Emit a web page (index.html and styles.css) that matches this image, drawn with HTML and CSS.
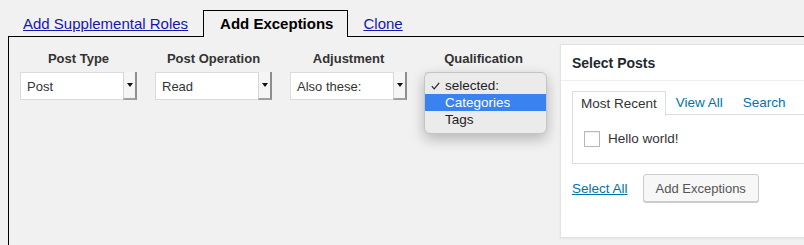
FILE: index.html
```html
<!DOCTYPE html>
<html lang="en">
<head>
<meta charset="utf-8">
<title>Add Exceptions</title>
<link rel="stylesheet" href="styles.css">
</head>
<body>
<nav class="tabs">
  <a class="tab" href="#">Add Supplemental Roles</a>
  <span class="tab tab-active">Add Exceptions</span>
  <a class="tab" href="#">Clone</a>
</nav>
<div class="tab-body">
  <div class="field">
    <div class="field-label">Post Type</div>
    <div class="select"><span class="select-value">Post</span><span class="select-arrow"></span></div>
  </div>
  <div class="field">
    <div class="field-label">Post Operation</div>
    <div class="select"><span class="select-value">Read</span><span class="select-arrow"></span></div>
  </div>
  <div class="field">
    <div class="field-label">Adjustment</div>
    <div class="select"><span class="select-value">Also these:</span><span class="select-arrow"></span></div>
  </div>
  <div class="field">
    <div class="field-label">Qualification</div>
    <div class="select-wrap">
      <div class="select"><span class="select-value"></span><span class="select-arrow"></span></div>
      <ul class="popup">
        <li class="popup-item"><svg class="popup-check" width="9" height="8" viewBox="0 0 9 8"><polyline points="0.8,4.2 3.2,6.8 8.2,0.8" fill="none" stroke="#222" stroke-width="1.2"/></svg>selected:</li>
        <li class="popup-item popup-item-active">Categories</li>
        <li class="popup-item">Tags</li>
      </ul>
    </div>
  </div>
  <section class="panel">
    <h3 class="panel-title">Select Posts</h3>
    <div class="panel-body">
      <ul class="ptabs">
        <li class="ptab ptab-active">Most Recent</li>
        <li class="ptab"><a href="#">View All</a></li>
        <li class="ptab"><a href="#">Search</a></li>
      </ul>
      <div class="ptab-panel">
        <label class="post-item"><span class="checkbox"></span>Hello world!</label>
      </div>
      <div class="panel-actions">
        <a class="select-all" href="#">Select All</a>
        <button class="button" type="button">Add Exceptions</button>
      </div>
    </div>
  </section>
</div>
</body>
</html>
```
FILE: styles.css
```css
html, body {
  margin: 0;
  padding: 0;
}
body {
  background: #f1f1f1;
  font-family: "Liberation Sans", Arial, Helvetica, sans-serif;
  color: #333;
  overflow: hidden;
  height: 245px;
}

/* top tabs */
.tabs {
  display: flex;
  align-items: flex-end;
  padding: 10px 0 0 8px;
  height: 26px;
}
.tab {
  display: block;
  padding: 0 15px;
  font-size: 15px;
  line-height: 25px;
  height: 25px;
  color: #1616b4;
  text-decoration: underline;
}
.tab-active {
  position: relative;
  z-index: 1;
  color: #000;
  font-weight: bold;
  text-decoration: none;
  border: 1px solid #000;
  border-bottom: none;
  background: #f1f1f1;
  padding: 0 14px 0 16px;
  height: 26px;
  margin-bottom: -1px;
}

/* tab body */
.tab-body {
  margin-left: 8px;
  border: 1px solid #000;
  border-right: none;
  border-bottom: none;
  display: flex;
  align-items: flex-start;
  gap: 18px;
  padding: 7px 0 0 11px;
  height: 201px;
}
.field {
  width: 117px;
  flex-shrink: 0;
  margin-top: 6px;
}
.field-label {
  font-size: 13px;
  font-weight: bold;
  line-height: 18px;
  text-align: center;
  color: #333;
  margin-bottom: 4px;
}
.select-wrap {
  position: relative;
}
.select {
  display: flex;
  height: 28px;
  box-sizing: border-box;
  border: 1px solid #dcdcdc;
  background: #fff;
}
.select-value {
  flex: 1;
  padding-left: 6px;
  font-size: 13px;
  line-height: 27px;
  color: #333;
}
.select-arrow {
  position: relative;
  width: 14px;
  box-sizing: border-box;
  margin: -1px -1px -1px 0;
  border-left: 1px solid #d6d6d6;
  border-right: 2px solid #8e8e8e;
  border-bottom: 2px solid #a0a0a0;
  background: #f5f5f5;
}
.select-arrow::after {
  content: "";
  position: absolute;
  left: 3px;
  top: 11px;
  border-left: 3px solid transparent;
  border-right: 3px solid transparent;
  border-top: 4px solid #111;
}

/* open native popup */
.popup {
  position: absolute;
  left: -1px;
  top: 0;
  width: 123px;
  box-sizing: border-box;
  margin: 0;
  padding: 4px 0 5px;
  list-style: none;
  background: #ebebeb;
  border: 1px solid #c4c4c4;
  border-radius: 6px;
  box-shadow: 0 5px 14px rgba(0, 0, 0, 0.25);
}
.popup-item {
  position: relative;
  padding-left: 20px;
  font-size: 13.5px;
  line-height: 18px;
  height: 17px;
  color: #222;
}
.popup-item-active {
  background: #3a82ef;
  color: #fff;
}
.popup-check {
  position: absolute;
  left: 6px;
  top: 5px;
}

/* select posts panel */
.panel {
  flex-shrink: 0;
  width: 300px;
  background: #fff;
  border: 1px solid #e3e3e3;
  box-shadow: 0 1px 2px rgba(0, 0, 0, 0.06);
}
.panel-title {
  margin: 0;
  padding: 2px 11px 0;
  font-size: 14px;
  font-weight: bold;
  line-height: 33px;
  color: #23282d;
  border-bottom: 1px solid #eee;
}
.panel-body {
  padding: 10px 0 35px 11px;
}
.ptabs {
  display: flex;
  margin: 0;
  padding: 0;
  list-style: none;
  height: 23px;
}
.ptab {
  padding: 0 10px;
  font-size: 13.5px;
  line-height: 24px;
}
.ptab a {
  color: #0073aa;
  text-decoration: none;
}
.ptab-active {
  position: relative;
  z-index: 1;
  padding: 0 8px;
  border: 1px solid #ddd;
  border-bottom: none;
  background: #fff;
  color: #333;
  height: 24px;
}
.ptab-panel {
  border: 1px solid #ddd;
  border-right: none;
  background: #fff;
  height: 50px;
  box-sizing: border-box;
  padding: 16px 0 0 11px;
}
.post-item {
  display: flex;
  align-items: center;
  gap: 8px;
  font-size: 13.5px;
  line-height: 16px;
  color: #333;
}
.checkbox {
  display: block;
  width: 16px;
  height: 16px;
  box-sizing: border-box;
  border: 1px solid #b4b9be;
  background: #fff;
  box-shadow: inset 0 1px 2px rgba(0, 0, 0, 0.07);
}
.panel-actions {
  display: flex;
  align-items: center;
  gap: 15px;
  margin-top: 10px;
}
.select-all {
  font-size: 13.5px;
  color: #0073aa;
  text-decoration: underline;
}
.button {
  height: 28px;
  padding: 0 12px;
  font-family: "Liberation Sans", Arial, Helvetica, sans-serif;
  font-size: 13px;
  color: #555;
  background: #f7f7f7;
  border: 1px solid #ccc;
  border-radius: 3px;
  box-shadow: 0 1px 0 #ccc;
}
```
